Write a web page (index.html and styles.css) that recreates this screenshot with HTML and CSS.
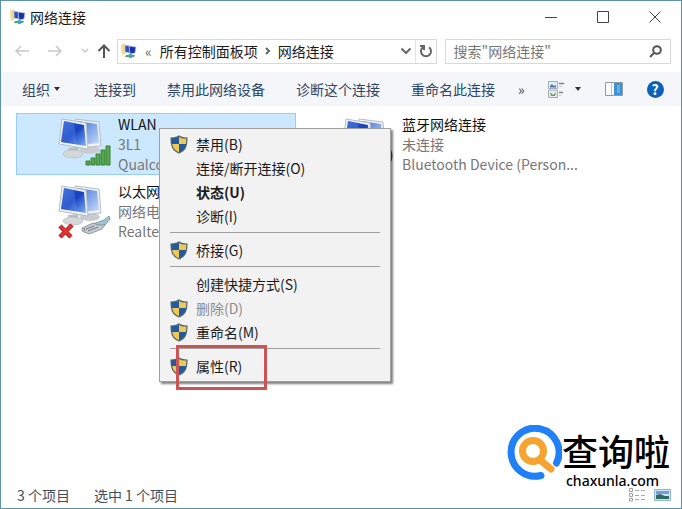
FILE: index.html
```
<!DOCTYPE html>
<html lang="zh-CN">
<head>
    <meta charset="UTF-8">
    <meta name="viewport" content="width=device-width, initial-scale=1.0">
    <title>网络连接</title>
    <link rel="stylesheet" href="styles.css">
</head>
<body>
    <!-- shared icons -->
    <svg class="defs" width="0" height="0">
        <defs>
            <linearGradient id="screen" x1="0" y1="0" x2="1" y2="1">
                <stop offset="0" stop-color="#2c5fd8"/>
                <stop offset="0.5" stop-color="#1740c0"/>
                <stop offset="1" stop-color="#7fb2f5"/>
            </linearGradient>
            <linearGradient id="screen-back" x1="0" y1="0" x2="1" y2="1">
                <stop offset="0" stop-color="#3d6fdc"/>
                <stop offset="1" stop-color="#c8dcf8"/>
            </linearGradient>
            <symbol id="computers" viewBox="0 0 54 54">
                <ellipse cx="32" cy="32" rx="10" ry="4" fill="#c9ccd0"/>
                <path d="M17 1 L41 4 L43 28 L21 30 Z" fill="#eef1f4" stroke="#b5bdc6"/>
                <path d="M19 3 L39 6 L41 25 L22 27 Z" fill="url(#screen-back)"/>
                <path d="M10 30 L20 29 L21 35 L11 36 Z" fill="#b9bec4"/>
                <ellipse cx="15" cy="36" rx="10" ry="4" fill="#d5d8db" stroke="#aeb3b8" stroke-width="0.6"/>
                <path d="M4 1 L28 5 L30 31 L1 26 Z" fill="#f3f5f7" stroke="#b5bdc6"/>
                <path d="M6 3 L26 7 L28 28 L3 24 Z" fill="url(#screen)"/>
                <path d="M6 3 L16 5 L19 26 L3 24 Z" fill="#6ea0f0" opacity="0.3"/>
            </symbol>
            <symbol id="net-small" viewBox="0 0 16 16">
                <path d="M0 2 L4 0 L5 10 L1 12 Z" fill="#f0d98a"/>
                <path d="M4 2 L9 3 L9 10 L4 9 Z" fill="#2a50c8" stroke="#c9d3e2" stroke-width="0.7"/>
                <path d="M8 3 L15 4 L14 10 L9 11 Z" fill="#1c2fa8" stroke="#b7c6dc" stroke-width="0.8"/>
                <path d="M5 12 L14 12 L13 14 L4 14 Z" fill="#3fa862"/>
                <path d="M8 11 h3 v4 h-3 z" fill="#4aa6c8"/>
            </symbol>
            <symbol id="shield" viewBox="0 0 18 19">
                <clipPath id="shield-shape">
                    <path d="M9 1 C11 3 14 3 17 3 C17 10 16 15 9 18 C2 15 1 10 1 3 C4 3 7 3 9 1 Z"/>
                </clipPath>
                <g clip-path="url(#shield-shape)">
                    <path d="M0 0 H9 V9 H0 Z M9 9 H18 V19 H9 Z" fill="#1f5b9e"/>
                    <path d="M9 0 H18 V9 H9 Z M0 9 H9 V19 H0 Z" fill="#f0c654"/>
                </g>
                <path d="M9 1 C11 3 14 3 17 3 C17 10 16 15 9 18 C2 15 1 10 1 3 C4 3 7 3 9 1 Z" fill="none" stroke="#4e6472" stroke-width="1.2"/>
            </symbol>
        </defs>
    </svg>

    <div class="window">
        <header class="titlebar">
            <svg class="title-icon"><use href="#net-small"/></svg>
            <h1>网络连接</h1>
            <div class="window-buttons">
                <button type="button" aria-label="最小化"><svg width="12" height="12"><path d="M0 6.5 H12"/></svg></button>
                <button type="button" aria-label="最大化"><svg width="12" height="12"><path d="M0.5 0.5 H11.5 V11.5 H0.5 Z"/></svg></button>
                <button type="button" aria-label="关闭"><svg width="12" height="12"><path d="M0.5 0.5 L11.5 11.5 M11.5 0.5 L0.5 11.5"/></svg></button>
            </div>
        </header>

        <nav class="navbar">
            <button type="button" class="nav-btn" aria-label="后退" disabled><svg width="14" height="12"><path d="M14 6 H1 M6 1 L1 6 L6 11"/></svg></button>
            <button type="button" class="nav-btn" aria-label="前进" disabled><svg width="14" height="12"><path d="M0 6 H13 M8 1 L13 6 L8 11"/></svg></button>
            <button type="button" class="nav-btn recent" aria-label="最近" disabled><svg width="8" height="6"><path d="M1 1 L4 4 L7 1"/></svg></button>
            <button type="button" class="nav-btn up" aria-label="向上"><svg width="14" height="14"><path d="M7 14 V2 M1.5 7 L7 1.5 L12.5 7"/></svg></button>
            <div class="address">
                <svg class="address-icon"><use href="#net-small"/></svg>
                <span class="crumb-more">«</span>
                <a href="#">所有控制面板项</a>
                <svg class="crumb-arrow" width="6" height="8"><path d="M1 1 L4 4 L1 7"/></svg>
                <a href="#">网络连接</a>
                <button type="button" class="drop" aria-label="展开"><svg width="12" height="8"><path d="M1.5 1.5 L6 6 L10.5 1.5"/></svg></button>
                <button type="button" class="refresh" aria-label="刷新"><svg width="14" height="14"><path d="M10 3.2 A5 5 0 1 1 4 3.2 M1 2 H5 V6"/></svg></button>
            </div>
            <div class="search">
                <input type="text" aria-label="搜索" placeholder='搜索"网络连接"'>
                <svg width="13" height="13"><circle cx="8" cy="5" r="3.8"/><path d="M5.2 7.8 L1 12"/></svg>
            </div>
        </nav>

        <div class="toolbar">
            <button type="button" class="organize">组织<i class="caret"></i></button>
            <button type="button">连接到</button>
            <button type="button">禁用此网络设备</button>
            <button type="button">诊断这个连接</button>
            <button type="button">重命名此连接</button>
            <button type="button" class="more">»</button>
            <div class="toolbar-right">
                <button type="button" class="view" aria-label="更改视图">
                    <svg width="17" height="17">
                        <path d="M0.5 0.5 H9.5 V7.5 H0.5 Z M0.5 9 H9.5 V16.5 H0.5 Z" fill="#e4ecf2" stroke="#a3adb5"/>
                        <path d="M2 5 L4 3 L6 5 L8 4 V6.5 H2 Z" fill="#4779b5"/>
                        <path d="M2 11 L5 14 L8 11 L7 15 H3 Z" fill="#6f9a4e"/>
                        <path d="M11 2.5 H16 M11 11.5 H15" stroke="#7a838a" stroke-width="1.4"/>
                        <path d="M11 5.5 H14 M11 14.5 H13" stroke="#c7ccd0"/>
                    </svg>
                    <i class="caret"></i>
                </button>
                <button type="button" aria-label="预览窗格">
                    <svg width="18" height="14">
                        <path d="M0.5 0.5 H17.5 V13.5 H0.5 Z" fill="#fff" stroke="#8f9aa3"/>
                        <path d="M6.5 1 V13" stroke="#b9c2c9"/>
                        <path d="M9 1 H17 V13 H9 Z" fill="#3c93d2"/>
                        <path d="M12 3 H15 V11 H12 Z" fill="#64b0e4"/>
                    </svg>
                </button>
                <button type="button" class="help" aria-label="帮助">?</button>
            </div>
        </div>

        <main class="connections">
            <div class="connection selected">
                <svg class="connection-icon" viewBox="0 0 54 54">
                    <use href="#computers" width="54" height="54"/>
                    <path d="M28 43 h4 v4 h-4 z M33 40 h4 v7 h-4 z M38 36 h4 v11 h-4 z M43 32 h4 v15 h-4 z M48 28 h4 v19 h-4 z" fill="#56a84f" stroke="#36803a"/>
                </svg>
                <div class="info">
                    <p class="name">WLAN</p>
                    <p>3L1</p>
                    <p>Qualcomm</p>
                </div>
            </div>
            <div class="connection">
                <svg class="connection-icon" viewBox="0 0 54 54">
                    <use href="#computers" width="54" height="54"/>
                    <path d="M2 41 L13 52 M14 40 L2 52" stroke="#a81818" stroke-width="4.5"/>
                    <path d="M2.5 41 L13 51.5 M13.5 40.5 L2.5 51.5" stroke="#e03434" stroke-width="3"/>
                    <path d="M32 40 L46 35 L51 31 L52 34 L47 40 L36 43 Z" fill="#9fc4d4" stroke="#6b8c9b" stroke-width="0.8"/>
                    <path d="M24 43 L35 38 L40 40 L47 40 L44 44 L31 49 L24 46 Z" fill="#c5ccd0" stroke="#7d878d" stroke-width="0.8"/>
                    <path d="M28 44 L36 41 M30 46 L40 42 M26 43 L27 46" stroke="#727c82"/>
                </svg>
                <div class="info">
                    <p class="name">以太网</p>
                    <p>网络电缆</p>
                    <p>Realtek</p>
                </div>
            </div>
            <div class="connection">
                <svg class="connection-icon" viewBox="0 0 54 54">
                    <use href="#computers" width="54" height="54"/>
                    <ellipse cx="42" cy="38" rx="8.5" ry="11" fill="#1d5c9c"/>
                    <path d="M38 33 L45 42 L42 46 V30 L45 34 L38 43" stroke="#fff" stroke-width="1.5"/>
                </svg>
                <div class="info">
                    <p class="name">蓝牙网络连接</p>
                    <p>未连接</p>
                    <p>Bluetooth Device (Person...</p>
                </div>
            </div>
        </main>

        <footer class="statusbar">
            <span>3 个项目</span>
            <span>选中 1 个项目</span>
            <div class="view-modes">
                <button type="button" aria-label="详细信息">
                    <svg width="16" height="14">
                        <path d="M0.5 0.5 H3.5 V3.5 H0.5 Z M0.5 5.5 H3.5 V8.5 H0.5 Z M0.5 10.5 H3.5 V13 H0.5 Z" fill="#fff" stroke="#9aa0a5"/>
                        <path d="M6 2.5 H10 M12 2.5 H16 M6 7.5 H10 M12 7.5 H16 M6 11.5 H10 M12 11.5 H16" stroke="#a6abaf"/>
                    </svg>
                </button>
                <button type="button" aria-label="大图标">
                    <svg width="17" height="12">
                        <path d="M0.5 0.5 H16.5 V11.5 H0.5 Z" fill="#cfe4f6" stroke="#8eb2d2"/>
                        <path d="M2 2 H15 V5 H2 Z" fill="#6f9fd8"/>
                        <path d="M2 6 L6 5 L11 7 L15 7 V10 H2 Z" fill="#2f6a5e"/>
                    </svg>
                </button>
            </div>
        </footer>

        <ul class="context-menu">
            <li><button type="button"><svg><use href="#shield"/></svg>禁用(B)</button></li>
            <li><button type="button">连接/断开连接(O)</button></li>
            <li><button type="button" class="default">状态(U)</button></li>
            <li><button type="button">诊断(I)</button></li>
            <li class="separator"></li>
            <li><button type="button"><svg><use href="#shield"/></svg>桥接(G)</button></li>
            <li class="separator"></li>
            <li><button type="button">创建快捷方式(S)</button></li>
            <li><button type="button" disabled><svg><use href="#shield"/></svg>删除(D)</button></li>
            <li><button type="button"><svg><use href="#shield"/></svg>重命名(M)</button></li>
            <li class="separator"></li>
            <li class="marked"><button type="button"><svg><use href="#shield"/></svg>属性(R)</button></li>
        </ul>

        <div class="watermark">
            <svg width="56" height="56" viewBox="0 0 56 56">
                <path d="M50.5 38 A24 24 0 1 0 35 50.5" stroke="#2080f5" stroke-width="7" stroke-linecap="round"/>
                <circle cx="27" cy="26" r="10.5" stroke="#f5a430" stroke-width="7"/>
                <path d="M34 35 L45 44" stroke="#f5a430" stroke-width="7" stroke-linecap="round"/>
            </svg>
            <div class="watermark-text">
                <p class="brand">查询啦</p>
                <p class="site">chaxunla.com</p>
            </div>
        </div>
    </div>
</body>
</html>
```

FILE: styles.css
```
*, *::after { margin: 0; padding: 0; box-sizing: border-box; }
body { font-family: "Noto Sans CJK SC", sans-serif; font-size: 14px; line-height: 20px; color: #1a1a1a; background: #fff; }
button { font: inherit; color: inherit; background: none; border: none; white-space: nowrap; }
svg { display: block; flex: none; fill: none; }
ul { list-style: none; }
.defs { position: absolute; }

.window { position: relative; min-height: 100vh; display: flex; flex-direction: column; border: 1px solid #5e92a8; overflow: hidden; }

/* title bar */
.titlebar { display: flex; align-items: center; height: 32px; padding-left: 9px; }
.title-icon { width: 16px; height: 16px; margin-right: 4px; }
.titlebar h1 { font-size: 14px; font-weight: normal; }
.window-buttons { display: flex; margin-left: auto; }
.window-buttons button { display: flex; justify-content: center; width: 52px; }
.window-buttons svg { stroke: #444; }

/* address row */
.navbar { display: flex; align-items: center; height: 36px; padding: 0 10px 0 14px; }
.nav-btn { margin-right: 19px; }
.nav-btn svg { stroke: #555; stroke-width: 2; }
.nav-btn:disabled svg { stroke: #c8c8c8; stroke-width: 1.5; }
.nav-btn.recent { margin-right: 8px; }
.nav-btn.up { margin-right: 6px; }
.address { display: flex; align-items: center; flex: 314; height: 25px; padding-left: 3px; border: 1px solid #d9d9d9; min-width: 0; white-space: nowrap; }
.address a { color: inherit; text-decoration: none; }
.address-icon { width: 16px; height: 16px; }
.address svg { stroke-width: 2; }
.crumb-more { margin: 0 8px; color: #666; }
.crumb-arrow { margin: 0 7px; stroke: #666; }
.drop { margin-left: auto; padding-right: 3px; }
.drop svg, .refresh svg { stroke: #666; }
.refresh { display: flex; align-items: center; height: 100%; padding: 0 3px; border-left: 1px solid #e3e3e3; }
.search { display: flex; align-items: center; flex: 208; height: 25px; margin-left: 8px; padding: 0 8px; border: 1px solid #d9d9d9; min-width: 0; }
.search input { flex: 1; min-width: 0; font: inherit; border: none; outline: none; background: none; }
.search input::placeholder { color: #777; }
.search svg { stroke: #555; stroke-width: 2; }

/* command bar */
.toolbar { display: flex; align-items: center; height: 34px; margin-top: 3px; padding: 0 17px 0 21px; gap: 31px; background: #f4f6f9; color: #2f4666; }
.toolbar button { display: flex; align-items: center; }
.toolbar .organize { padding-right: 3px; }
.caret { margin-left: 4px; border: 3px solid transparent; border-top: 4px solid #333; border-bottom: none; }
.toolbar .more { margin-left: -8px; }
.toolbar-right { display: flex; align-items: center; gap: 24px; margin-left: auto; }
.toolbar .more + .toolbar-right { margin-left: -8px; }
.view .caret { margin-left: 10px; }
.toolbar .help { justify-content: center; width: 17px; height: 17px; border-radius: 50%; background: #0a62b8; color: #fff; font-weight: bold; }

/* connections */
.connections { flex: 1; display: grid; grid-auto-flow: column; grid-auto-columns: 280px; grid-template-rows: 62px 62px; gap: 5px 4px; padding: 7px 15px; }
.connection { display: flex; padding: 0 3px 0 41px; border: 1px solid transparent; overflow: hidden; }
.connection.selected { background: #cce8ff; border-color: #99cdf5; }
.connection-icon { width: 54px; height: 54px; margin-top: 4px; margin-right: 6px; }
.info { min-width: 0; white-space: nowrap; color: #777; }
.info .name { color: #111; }

/* status bar */
.statusbar { display: flex; align-items: center; gap: 24px; height: 26px; padding: 0 10px 0 16px; color: #3f4f60; }
.view-modes { display: flex; align-items: center; gap: 9px; margin-left: auto; }

/* right click menu */
.context-menu { position: absolute; left: 158px; top: 127px; width: 232px; padding: 3px 2px; background: #f2f2f2; border: 1px solid #a0a0a0; box-shadow: 2px 2px 2px rgba(0,0,0,0.5); }
.context-menu button { display: flex; align-items: center; width: 100%; height: 24px; padding-left: 34px; }
.context-menu button:disabled { color: #8d8d8d; }
.context-menu svg { width: 18px; height: 19px; margin-left: -26px; margin-right: 8px; }
.context-menu .default { font-weight: bold; }
.separator { height: 1px; margin: 4px 8px 5px; background: #a0a0a0; }
.marked { position: relative; }
.marked::after { content: ""; position: absolute; left: 14px; top: -9px; width: 91px; height: 45px; border: 3px solid #cb5555; }

/* watermark */
.watermark { position: absolute; right: 11px; bottom: 16px; display: flex; align-items: flex-start; }
.watermark p { white-space: nowrap; color: #000; }
.watermark-text { padding-top: 5px; }
.brand { font-size: 36px; line-height: 40px; font-weight: 500; }
.site { padding-left: 4px; font-family: "Noto Sans", sans-serif; font-size: 14px; line-height: 22px; font-weight: 500; }
```
